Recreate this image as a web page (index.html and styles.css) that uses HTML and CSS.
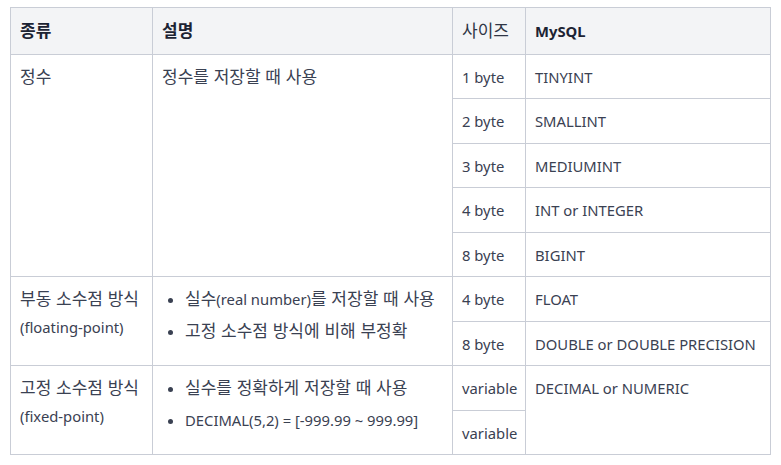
FILE: index.html
```html
<!DOCTYPE html>
<html lang="ko">
<head>
<meta charset="utf-8">
<link rel="stylesheet" href="styles.css">
</head>
<body>
<table class="types">
  <colgroup>
    <col class="c1"><col class="c2"><col class="c3"><col class="c4">
  </colgroup>
  <thead>
    <tr class="head">
      <th><span class="ko">종류</span></th><th><span class="ko">설명</span></th><th class="light"><span class="ko">사이즈</span></th><th>MySQL</th>
    </tr>
  </thead>
  <tbody>
    <tr>
      <td rowspan="5"><span class="ko">정수</span></td>
      <td rowspan="5"><span class="ko">정수를 저장할 때 사용</span></td>
      <td>1 byte</td><td>TINYINT</td>
    </tr>
    <tr><td>2 byte</td><td>SMALLINT</td></tr>
    <tr><td>3 byte</td><td>MEDIUMINT</td></tr>
    <tr><td>4 byte</td><td>INT or INTEGER</td></tr>
    <tr><td>8 byte</td><td>BIGINT</td></tr>
    <tr>
      <td rowspan="2"><span class="ko">부동 소수점 방식</span><br>(floating-point)</td>
      <td rowspan="2">
        <ul class="bullets">
          <li><span class="ko">실수</span>(real number)<span class="ko">를 저장할 때 사용</span></li>
          <li><span class="ko">고정 소수점 방식에 비해 부정확</span></li>
        </ul>
      </td>
      <td>4 byte</td><td>FLOAT</td>
    </tr>
    <tr><td>8 byte</td><td>DOUBLE or DOUBLE PRECISION</td></tr>
    <tr>
      <td rowspan="2"><span class="ko">고정 소수점 방식</span><br>(fixed-point)</td>
      <td rowspan="2">
        <ul class="bullets">
          <li><span class="ko">실수를 정확하게 저장할 때 사용</span></li>
          <li>DECIMAL(5,2) = [-999.99 ~ 999.99]</li>
        </ul>
      </td>
      <td>variable</td>
      <td rowspan="2">DECIMAL or NUMERIC</td>
    </tr>
    <tr><td>variable</td></tr>
  </tbody>
</table>
</body>
</html>
```

FILE: styles.css
```css
html, body {
  margin: 0;
  padding: 0;
  background: #ffffff;
}
body {
  padding: 7px 0 0 10px;
  font-family: "Noto Sans", "Noto Sans CJK KR", sans-serif;
  font-size: 14.8px;
  color: #3a4152;
}
.types {
  border-collapse: collapse;
  table-layout: fixed;
  width: 760px;
}
.c1 { width: 142px; }
.c2 { width: 300px; }
.c3 { width: 73px; }
.c4 { width: 245px; }
.types th,
.types td {
  border: 1px solid #c9cdd6;
  padding: 8px 9px 0 9px;
  line-height: 28px;
  vertical-align: top;
  text-align: left;
  white-space: nowrap;
}
.types tbody tr {
  height: 44.44px;
}
.types tr.head {
  height: 47px;
}
.types th {
  background: #f3f4f6;
  color: #1c2333;
  font-weight: 700;
  padding-top: 9px;
}
.types th.light {
  font-weight: 400;
  color: #2f3545;
}
.ko {
  font-family: "Noto Sans CJK KR", sans-serif;
  font-size: 17px;
  line-height: 1;
}
.bullets {
  margin: 0;
  padding: 0 0 0 23px;
  list-style: disc;
}
.bullets li + li {
  margin-top: 4px;
}
```
